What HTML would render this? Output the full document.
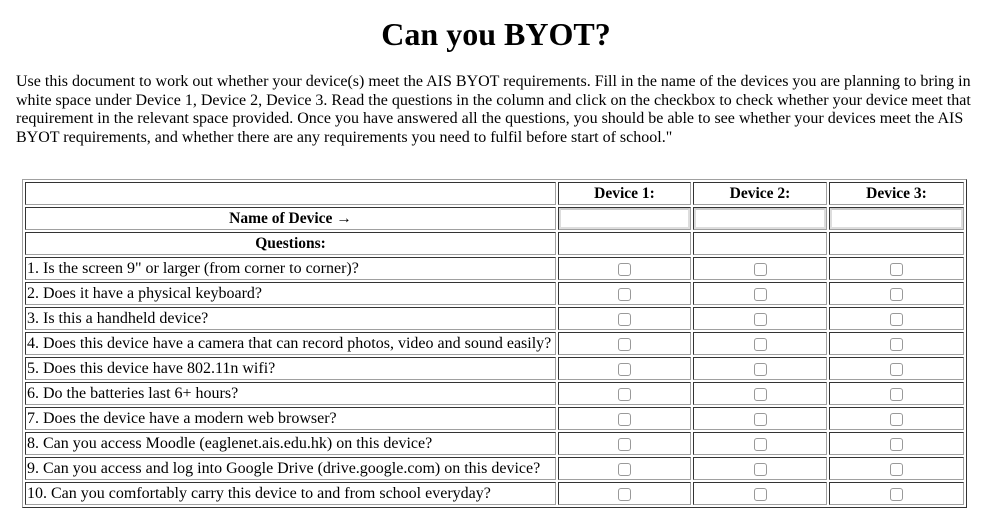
<!DOCTYPE html>
<html><head><meta charset="utf-8"><style>
body{margin:0;background:#fff;font-family:"Liberation Serif",serif;color:#000;width:992px;height:527px;overflow:hidden}
h1{position:absolute;left:0;width:992px;top:14px;margin:0;text-align:center;font-size:32px;font-weight:bold;line-height:40px}
p{position:absolute;left:16px;top:73px;margin:0;font-size:16px;line-height:18.5px;white-space:nowrap}
table{position:absolute;left:22px;top:179px;border-collapse:separate;border-spacing:2px;border:1px solid;border-color:#a0a0a0 #333 #333 #a0a0a0;table-layout:fixed}
td{border:1px solid;border-color:#333 #a0a0a0 #a0a0a0 #333;height:21px;padding:0 1px;font-size:16px;line-height:21px;white-space:nowrap;overflow:hidden}
.c{text-align:center;font-weight:bold;font-size:15.5px}
.b{text-align:center}
.cb{display:inline-block;width:11px;height:11px;border:1px solid #999;border-radius:3px;vertical-align:middle;background:#fff}
.in{display:block;height:17px;border:2px solid #ddd;border-top-color:#ccc;margin:0 -1px}
</style></head><body>
<h1>Can you BYOT?</h1>
<p>Use this document to work out whether your device(s) meet the AIS BYOT requirements. Fill in the name of the devices you are planning to bring in<br>white space under Device 1, Device 2, Device 3. Read the questions in the column and click on the checkbox to check whether your device meet that<br>requirement in the relevant space provided. Once you have answered all the questions, you should be able to see whether your devices meet the AIS<br>BYOT requirements, and whether there are any requirements you need to fulfil before start of school."</p>
<table>
<colgroup><col style="width:531px"><col style="width:133px"><col style="width:134px"><col style="width:135px"></colgroup>
<tr><td></td><td class="c">Device 1:</td><td class="c">Device 2:</td><td class="c">Device 3:</td></tr>
<tr><td class="c">Name of Device →</td><td><span class="in"></span></td><td><span class="in"></span></td><td><span class="in"></span></td></tr>
<tr><td class="c">Questions:</td><td></td><td></td><td></td></tr>
<tr><td>1. Is the screen 9" or larger (from corner to corner)?</td><td class="b"><span class="cb"></span></td><td class="b"><span class="cb"></span></td><td class="b"><span class="cb"></span></td></tr>
<tr><td>2. Does it have a physical keyboard?</td><td class="b"><span class="cb"></span></td><td class="b"><span class="cb"></span></td><td class="b"><span class="cb"></span></td></tr>
<tr><td>3. Is this a handheld device?</td><td class="b"><span class="cb"></span></td><td class="b"><span class="cb"></span></td><td class="b"><span class="cb"></span></td></tr>
<tr><td>4. Does this device have a camera that can record photos, video and sound easily?</td><td class="b"><span class="cb"></span></td><td class="b"><span class="cb"></span></td><td class="b"><span class="cb"></span></td></tr>
<tr><td>5. Does this device have 802.11n wifi?</td><td class="b"><span class="cb"></span></td><td class="b"><span class="cb"></span></td><td class="b"><span class="cb"></span></td></tr>
<tr><td>6. Do the batteries last 6+ hours?</td><td class="b"><span class="cb"></span></td><td class="b"><span class="cb"></span></td><td class="b"><span class="cb"></span></td></tr>
<tr><td>7. Does the device have a modern web browser?</td><td class="b"><span class="cb"></span></td><td class="b"><span class="cb"></span></td><td class="b"><span class="cb"></span></td></tr>
<tr><td>8. Can you access Moodle (eaglenet.ais.edu.hk) on this device?</td><td class="b"><span class="cb"></span></td><td class="b"><span class="cb"></span></td><td class="b"><span class="cb"></span></td></tr>
<tr><td>9. Can you access and log into Google Drive (drive.google.com) on this device?</td><td class="b"><span class="cb"></span></td><td class="b"><span class="cb"></span></td><td class="b"><span class="cb"></span></td></tr>
<tr><td>10. Can you comfortably carry this device to and from school everyday?</td><td class="b"><span class="cb"></span></td><td class="b"><span class="cb"></span></td><td class="b"><span class="cb"></span></td></tr>
</table>
</body></html>
